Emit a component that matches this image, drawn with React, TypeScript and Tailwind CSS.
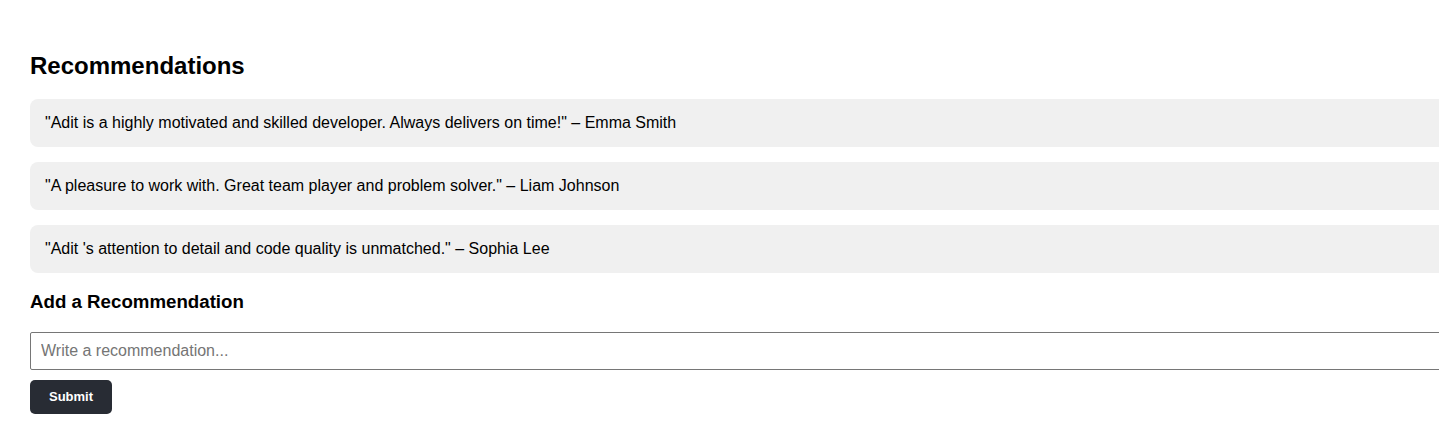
const recommendations = [
  { text: "Adit is a highly motivated and skilled developer. Always delivers on time!", author: "Emma Smith" },
  { text: "A pleasure to work with. Great team player and problem solver.", author: "Liam Johnson" },
  { text: "Adit 's attention to detail and code quality is unmatched.", author: "Sophia Lee" },
];

export default function App() {
  return (
    <div className="w-full h-[429px] overflow-hidden bg-white font-['Liberation_Sans',Arial,sans-serif] text-black">
      <section className="w-[1560px] pl-[30px] pt-[52px]">
        <h2 className="text-[24px] leading-[28px] font-bold">Recommendations</h2>
        <div className="mt-[19px] flex flex-col gap-[15px]">
          {recommendations.map((r) => (
            <div key={r.author} className="bg-[#f0f0f0] rounded-lg px-[15px] py-[15px] text-[16px] leading-[18px]">
              "{r.text}" – {r.author}
            </div>
          ))}
        </div>
        <h3 className="mt-[18px] text-[18.7px] leading-[22px] font-bold">Add a Recommendation</h3>
        <input
          type="text"
          placeholder="Write a recommendation..."
          className="mt-[19px] block w-full h-[38px] border border-[#767676] rounded-[2px] px-[10px] text-[16px] placeholder:text-[#757575] outline-none"
        />
        <button
          type="button"
          className="mt-[10px] h-[34px] w-[82px] bg-[#282c34] text-white rounded-[5px] text-[13px] font-bold"
        >
          Submit
        </button>
      </section>
    </div>
  );
}
